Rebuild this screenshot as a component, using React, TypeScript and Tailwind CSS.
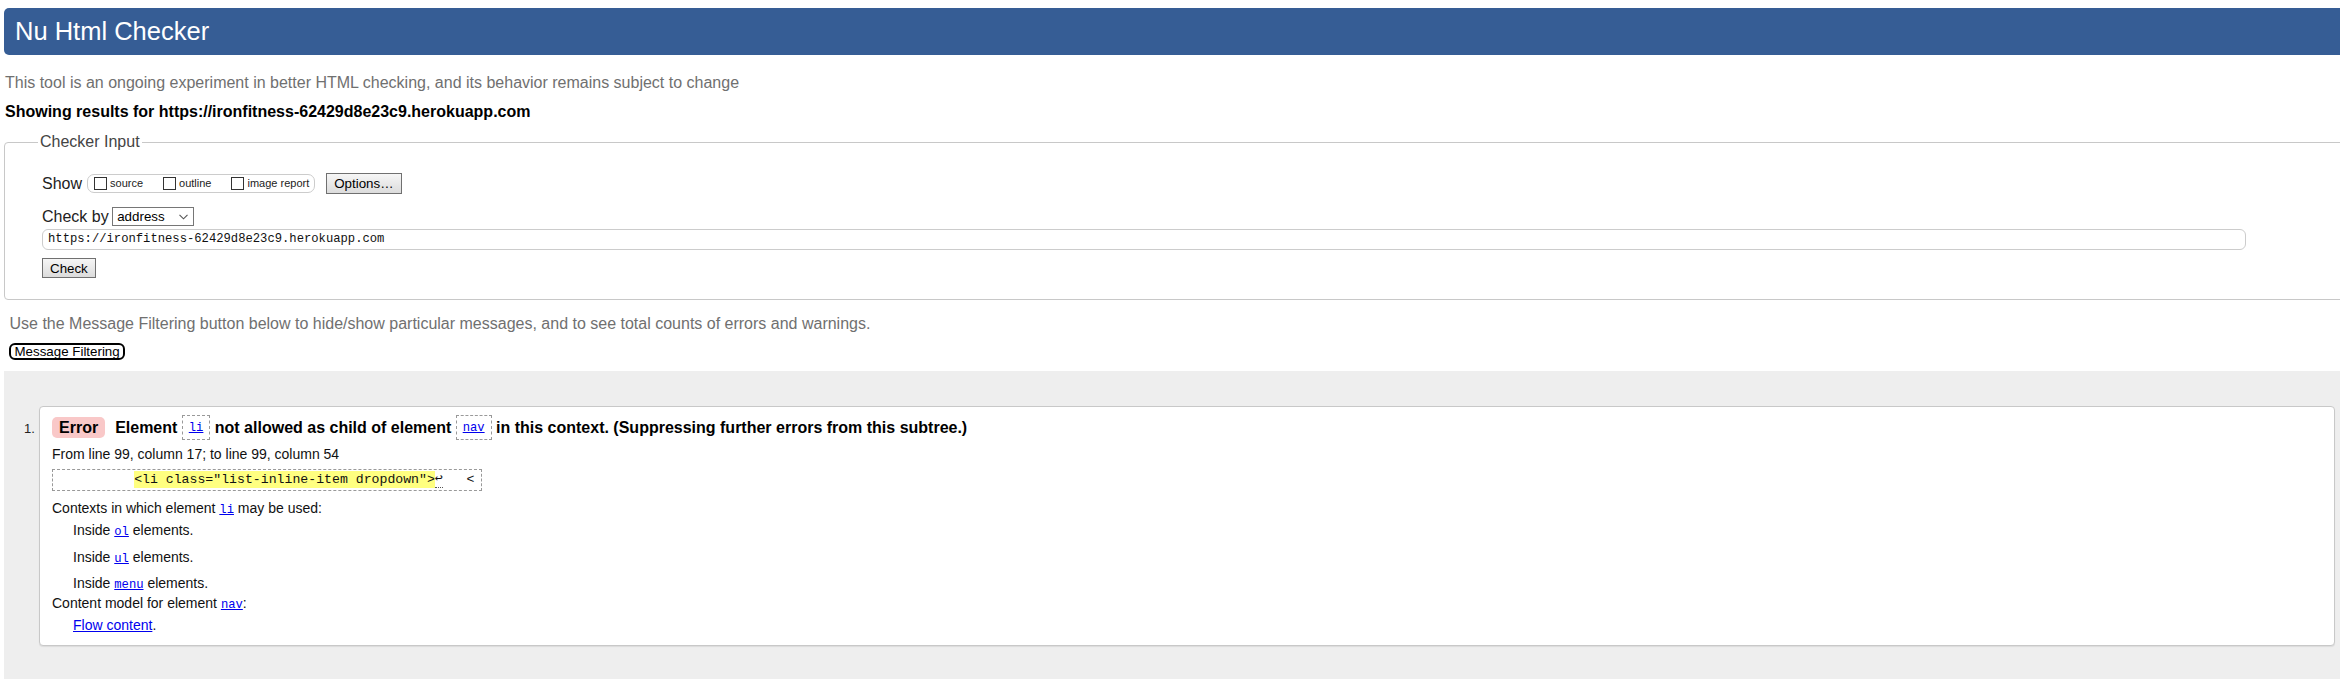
import React from "react";

const Code = ({ children }: { children: React.ReactNode }) => (
  <a href="#" className="font-['Liberation_Mono',monospace] text-[12.2px] leading-[14px] text-[#0000ee] underline">
    {children}
  </a>
);

const CodeBox = ({ children }: { children: React.ReactNode }) => (
  <span className="mx-[4.4px] flex h-[25px] items-center border border-dashed border-[#999] px-[6px] font-normal">
    {children}
  </span>
);

const Checkbox = ({ label }: { label: string }) => (
  <label className="flex items-center">
    <span className="h-[13px] w-[13px] border border-[#333] bg-white" />
    <span className="ml-[3px] text-[11px] text-[#222]">{label}</span>
  </label>
);

export default function App() {
  const url = "https://ironfitness-62429d8e23c9.herokuapp.com";

  return (
    <div className="flex min-h-[679px] flex-col overflow-hidden bg-white font-['Liberation_Sans',Arial,sans-serif] text-black">
      <h1 className="-mr-4 ml-1 mt-2 h-[47px] rounded-[5px] bg-[#365d95] pl-[11px] text-[25.5px] font-normal leading-[47px] text-white">
        Nu Html Checker
      </h1>

      <p className="ml-[5px] mt-[18px] text-[16px] leading-[20px] text-[#707070]">
        This tool is an ongoing experiment in better HTML checking, and its behavior remains subject to change
      </p>
      <p className="ml-[5px] mt-[9px] text-[16px] font-bold leading-[20px]">
        Showing results for {url}
      </p>

      <fieldset className="-mr-4 ml-1 mt-[11px] rounded-[4px] border border-[#c8c8c8] pb-[21px] pl-[37px] pt-[22px]">
        <legend className="-ml-[4px] px-[2px] text-[16px] leading-[18px] text-[#444]">Checker Input</legend>

        <div className="flex h-[21px] items-center">
          <span className="text-[16px] text-[#222]">Show</span>
          <div className="ml-[5px] flex h-[19px] items-center gap-[20px] rounded-[7px] border border-[#ccc] pl-[6px] pr-[5px]">
            <Checkbox label="source" />
            <Checkbox label="outline" />
            <Checkbox label="image report" />
          </div>
          <button
            type="button"
            className="ml-[11px] h-[21px] border border-[#707070] bg-gradient-to-b from-[#f6f6f6] to-[#dcdcdc] px-[7px] text-[13.33px] text-black"
          >
            Options…
          </button>
        </div>

        <div className="mt-[13px] flex h-[19px] items-center">
          <span className="text-[16px] text-[#222]">Check by</span>
          <div className="ml-[3.5px] flex h-[19px] w-[82px] items-center justify-between border border-[#767676] bg-white pl-[4px] pr-[4px] text-[13.33px]">
            <span>address</span>
            <svg width="9" height="6" viewBox="0 0 9 6" className="mr-[1px]">
              <path d="M0.5 0.8 L4.5 4.8 L8.5 0.8" fill="none" stroke="#555" strokeWidth="1.1" />
            </svg>
          </div>
        </div>

        <div className="mt-[3px] flex h-[21px] w-[2204px] items-center rounded-[6px] border border-[#ccc] pl-[5px] font-['Liberation_Mono',monospace] text-[12.2px] text-[#111]">
          {url}
        </div>

        <button
          type="button"
          className="mt-[8px] block h-[20px] border border-[#707070] bg-gradient-to-b from-[#f6f6f6] to-[#dcdcdc] px-[7px] text-[13.33px] text-black"
        >
          Check
        </button>
      </fieldset>

      <p className="ml-[9.5px] mt-[14px] text-[16px] leading-[20px] text-[#707070]">
        Use the Message Filtering button below to hide/show particular messages, and to see total counts of errors and warnings.
      </p>
      <div className="ml-[9px] mt-[9px] flex">
        <button
          type="button"
          className="h-[17px] rounded-[6px] border-2 border-black bg-white px-[3.5px] text-[13.33px] leading-[13px] text-black"
        >
          Message Filtering
        </button>
      </div>

      <div className="ml-1 mt-[11px] flex flex-1 bg-[#eeeeee] pb-[32px] pl-[20px] pr-[5px] pt-[35px]">
        <span className="mt-[14.7px] w-[15px] text-[13px] leading-[16px] text-[#222]">1.</span>

        <div className="flex-1 self-start rounded-[4px] border border-[#c8c8c8] bg-white pb-[10px] pl-[12px] pt-[8px] shadow-[0_1px_1px_rgba(0,0,0,0.08)]">
          <div className="flex h-[25px] items-center text-[16px] font-bold">
            <span className="h-[21px] rounded-[5px] bg-[#f9c8c8] px-[7px] leading-[21px]">Error</span>
            <span className="ml-[10px]">Element</span>
            <CodeBox>
              <Code>li</Code>
            </CodeBox>
            <span>not allowed as child of element</span>
            <CodeBox>
              <Code>nav</Code>
            </CodeBox>
            <span>in this context. (Suppressing further errors from this subtree.)</span>
          </div>

          <p className="mt-[4.4px] text-[14px] leading-[20px] text-[#111]">
            From line 99, column 17; to line 99, column 54
          </p>

          <div className="mt-[4.6px] flex h-[22px] w-[430px] items-center whitespace-pre border border-dashed border-[#999] px-[2px] font-['Liberation_Mono',monospace] text-[13.2px] text-[#111]">
            <span>{"          "}</span>
            <span className="h-[17px] bg-[#ffff80] leading-[17px]">{'<li class="list-inline-item dropdown">'}</span>
            <span className="h-[17px] border-b border-dotted border-[#555] leading-[16px]">↩</span>
            <span>{"   <"}</span>
          </div>

          <p className="mt-[7.4px] text-[14px] leading-[20px] text-[#111]">
            Contexts in which element <Code>li</Code> may be used:
          </p>
          <div className="pl-[21px] text-[14px] leading-[20px] text-[#111]">
            <p className="mt-[2px]">
              Inside <Code>ol</Code> elements.
            </p>
            <p className="mt-[7px]">
              Inside <Code>ul</Code> elements.
            </p>
            <p className="mt-[6px]">
              Inside <Code>menu</Code> elements.
            </p>
          </div>
          <p className="text-[14px] leading-[20px] text-[#111]">
            Content model for element <Code>nav</Code>:
          </p>
          <p className="mt-[2px] pl-[21px] text-[14px] leading-[20px] text-[#111]">
            <a href="#" className="text-[#0000ee] underline">
              Flow content
            </a>
            .
          </p>
        </div>
      </div>
    </div>
  );
}
